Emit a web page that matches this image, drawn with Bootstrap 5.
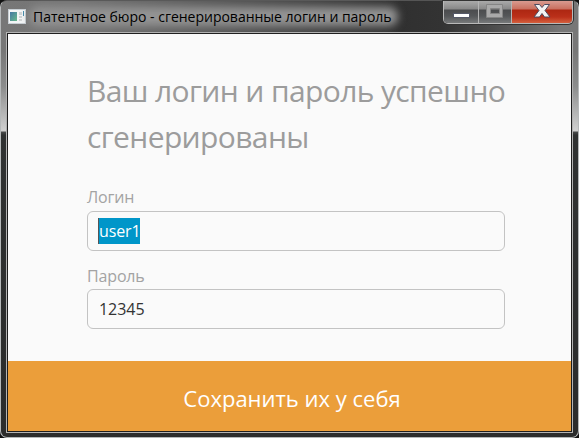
<!DOCTYPE html>
<html lang="ru">
<head>
<meta charset="utf-8">
<meta name="viewport" content="width=device-width, initial-scale=1">
<title>Патентное бюро</title>
<link href="https://cdn.jsdelivr.net/npm/bootstrap@5.3.0/dist/css/bootstrap.min.css" rel="stylesheet">
<style>
html,body{height:100%}
body{font-family:"Open Sans","Noto Sans",sans-serif;background:#111;overflow:hidden}
.win{width:579px;height:438px;border:1px solid #b5b8b9;border-top-color:#555;border-radius:7px;padding:0 5px 5px;
background:linear-gradient(180deg,#777 0,#777 50px,#8b8c8c 85px,#d0d0d0 130px,#4a4c4c 131px,#303232 134px,#2b2c2c 100%)}
.titlebar{height:31px;margin:0 -5px;padding-left:7px;border-radius:6px 6px 0 0;
background:linear-gradient(90deg,#777 0,#757575 70px,#606060 180px,#474747 300px,#303030 400px,#333 440px,#4b4b4b 490px,#777 560px)}
.app-icon{margin-top:7px}
.caption-text{font-size:14px;line-height:20px;color:#000;margin:6px 0 0 7px;letter-spacing:-.01px;white-space:nowrap;width:359px}
.caption-text span{position:relative}
.glow{position:relative}
.glow::before{content:"";position:absolute;left:-4px;right:-6px;top:0;height:19px;border-radius:9px;background:#949494;filter:blur(4px)}
.controls{margin-right:5px;width:130px;height:23px;border:1px solid #b9b9b9;border-top:0;border-radius:0 0 5px 5px;overflow:hidden;box-shadow:0 0 0 1px #333}
.ctl{height:22px;background:linear-gradient(#aaa 0,#888 8px,#4b4c4e 9px,#555759 15px,#77797a 22px);border-right:1px solid #b5b5b5}
.ctl svg{display:block}
.ctl-min{width:35px}.ctl-max{width:33px}
.ctl-close{background:linear-gradient(#d99b90 0,#c9705f 8px,#ad2712 9px,#bb301a 16px,#d45f3d 22px);border:0}
.client{height:401px;border:1px solid #b3b3b3;background:#1d1d1d;padding:1px}
.sheet{background:#fafafa;height:327px;padding:34px 66px 0 79px}
h1{font-weight:370;font-size:30px;line-height:46px;color:#9c9c9c;letter-spacing:-.62px;white-space:nowrap}
.field-label{font-size:16px;line-height:22px;color:#a3a3a3;letter-spacing:-.15px;font-weight:370}
.label-login{margin:26px 0 3px}
.label-password{margin:14px 0 2px}
.field{height:40px;width:418px;border:1px solid #c3c3c3;border-radius:6px;background:#fafafa;padding:0 11px;color:#333;font-size:16px}
.field span{letter-spacing:-.05px;line-height:26px}
.chosen{background:#0096c9;color:#fff;border-left:1px solid #555;margin-left:-1px;width:42px;white-space:nowrap;font-weight:370}
.field .chosen{letter-spacing:-.1px}
.save{height:70px;width:100%;background:#eb9e3a;color:#fff;border:0;border-radius:0;font-size:22px;padding:4px 0 0 5px}
</style>
<script src="https://cdn.jsdelivr.net/npm/bootstrap@5.3.0/dist/js/bootstrap.bundle.min.js"></script>
</head>
<body>
<div class="win">
  <header class="titlebar d-flex align-items-start">
    <svg class="app-icon flex-shrink-0" width="18" height="17" viewBox="0 0 18 17"><rect x=".5" y="1.5" width="17" height="14" fill="#f3f5f6" stroke="#c8cfd4"/><defs><linearGradient id="g" x2="1" y2="1"><stop stop-color="#4478a4"/><stop offset="1" stop-color="#67b98a"/></linearGradient></defs><path fill="url(#g)" d="M2 4h7v9H2z"/><path fill="#d1d4d5" d="M11 4h3v3h-3zM11 8h3v2h-3zM11 11h3v2h-3z"/><path fill="#438cad" d="M15 3h1v5h-1z"/></svg>
    <div class="caption-text glow"><span>Патентное бюро - сгенерированные логин и пароль</span></div>
    <div class="controls d-flex ms-auto">
      <div class="ctl ctl-min"><svg width="34" height="22"><rect x="9.500" y="12.500" width="16" height="4" fill="#fff" stroke="#555968"/></svg></div>
      <div class="ctl ctl-max"><svg width="32" height="22"><path fill="#a9a9a9" fill-rule="evenodd" stroke="#858585" d="M7.500 3.500h16v13h-16zM11.500 7.500v5h9v-5z"/></svg></div>
      <div class="ctl ctl-close flex-fill"><svg width="60" height="22"><path fill="#f3f3f3" stroke="#4d4d61" d="M22.500 3.500h5l2.500 3 2.500-3h5l-4.500 6 5 6.500h-5.500l-2.500-3.500-2.500 3.500h-5.500l5-6.500z"/></svg></div>
    </div>
  </header>
  <main class="client">
    <section class="sheet">
      <h1 class="mb-0">Ваш логин и пароль успешно<br>сгенерированы</h1>
      <div class="field-label label-login">Логин</div>
      <div class="field d-flex align-items-center"><span class="chosen">user1</span></div>
      <div class="field-label label-password">Пароль</div>
      <div class="field d-flex align-items-center"><span>12345</span></div>
    </section>
    <button class="save btn" type="button">Сохранить их у себя</button>
  </main>
</div>
</body>
</html>
